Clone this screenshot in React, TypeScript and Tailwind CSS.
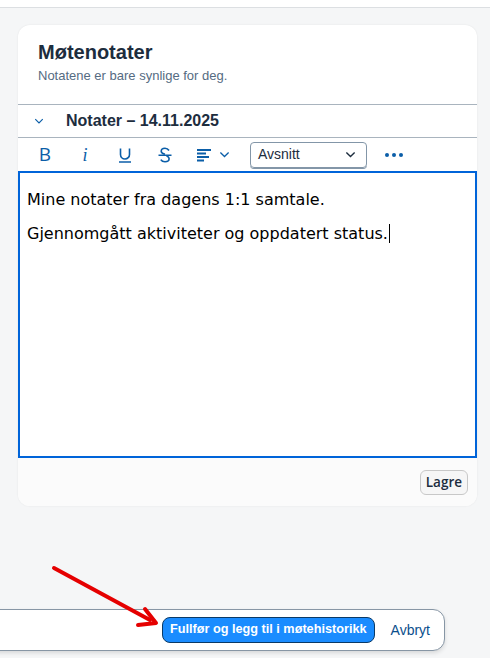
import React from "react";

const blue = "#0b5ea8";

function ToolbarButton({ children }: { children: React.ReactNode }) {
  return <button className="flex h-[28px] w-[40px] items-center justify-center">{children}</button>;
}

export default function App() {
  return (
    <div
      className="relative flex h-[658px] w-[490px] flex-col overflow-hidden bg-[#f5f6f7]"
      style={{ fontFamily: "'Liberation Sans', Arial, sans-serif" }}
    >
      <div className="h-[8px] shrink-0 border-b border-[#dcdfe2] bg-white" />

      <section className="ml-[18px] mr-[13px] mt-[17px] flex flex-col overflow-hidden rounded-xl bg-white shadow-[0_0_2px_rgba(0,0,0,0.08)]">
        <div className="px-5 pb-[20px] pt-[14px]">
          <h1 className="text-[20px] font-bold leading-[26px] text-[#1d2d3e]">Møtenotater</h1>
          <p className="mt-[3px] text-[13px] leading-[16px] text-[#556b82]">Notatene er bare synlige for deg.</p>
        </div>

        <div className="flex h-[34px] items-center border-y border-[#a9b4be] text-[#1d2d3e]">
          <svg viewBox="0 0 16 16" className="ml-[15px] h-[12px] w-[12px]" fill="none" stroke={blue} strokeWidth="1.6">
            <path d="M3 5.5 8 10.5 13 5.5" />
          </svg>
          <span className="ml-[21px] text-[16px] font-bold">Notater – 14.11.2025</span>
        </div>

        <div className="flex h-[33px] items-center pl-[7px]">
          <ToolbarButton>
            <span className="text-[19px] leading-none text-[#0b5ea8]" style={{ fontFamily: "'Open Sans', sans-serif" }}>B</span>
          </ToolbarButton>
          <ToolbarButton>
            <span className="text-[18px] italic leading-none text-[#0b5ea8]" style={{ fontFamily: "'Liberation Serif', serif" }}>i</span>
          </ToolbarButton>
          <ToolbarButton>
            <svg viewBox="0 0 16 16" className="h-[16px] w-[16px]" fill="none" stroke={blue} strokeWidth="1.6">
              <path d="M3.5 1.5v6a4.5 4.5 0 0 0 9 0v-6" />
              <path d="M2 15h12" />
            </svg>
          </ToolbarButton>
          <ToolbarButton>
            <svg viewBox="0 0 16 16" className="h-[16px] w-[16px]" fill="none" stroke={blue} strokeWidth="1.6">
              <path d="M12 3.5C11 1.8 9.5 1.2 8 1.2 5.8 1.2 4.2 2.5 4.2 4.2c0 1.4 1 2.3 3.8 3.1" />
              <path d="M9.5 9c1.8.6 2.6 1.5 2.6 2.8 0 1.8-1.7 3-4.1 3-1.8 0-3.4-.8-4.2-2.2" />
              <path d="M1.5 8.2h13" />
            </svg>
          </ToolbarButton>
          <div className="flex h-[28px] items-center gap-[7px] pl-[11px]">
            <svg viewBox="0 0 16 16" className="h-[16px] w-[16px]" fill="none" stroke={blue} strokeWidth="1.8">
              <path d="M1 3h14M1 6.5h9M1 10h12M1 13.5h7" />
            </svg>
            <svg viewBox="0 0 16 16" className="h-[11px] w-[11px]" fill="none" stroke={blue} strokeWidth="1.8">
              <path d="M2 5l6 6 6-6" />
            </svg>
          </div>
          <div className="ml-[20px] flex h-[26px] w-[117px] items-center justify-between rounded-[4px] border border-[#8396a8] pl-[7px] pr-[10px] text-[14px] text-[#1d2d3e] shadow-[0_1px_0_#8396a8]">
            <span>Avsnitt</span>
            <svg viewBox="0 0 16 16" className="h-[11px] w-[11px]" fill="none" stroke="#1d2d3e" strokeWidth="2">
              <path d="M2 5l6 6 6-6" />
            </svg>
          </div>
          <div className="ml-[18px] flex gap-[3px]">
            <span className="h-[4px] w-[4px] rounded-full bg-[#0b5ea8]" />
            <span className="h-[4px] w-[4px] rounded-full bg-[#0b5ea8]" />
            <span className="h-[4px] w-[4px] rounded-full bg-[#0b5ea8]" />
          </div>
        </div>

        <div
          className="h-[287px] border-2 border-[#0064d9] px-[7px] pt-[17px] text-[16px] leading-[20px] text-black"
          style={{ fontFamily: "'DejaVu Sans', Verdana, sans-serif" }}
        >
          <p>Mine notater fra dagens 1:1 samtale.</p>
          <p className="mt-[14px]">
            Gjennomgått aktiviteter og oppdatert status.
            <span className="ml-[1px] inline-block h-[19px] w-px bg-black align-[-4px]" />
          </p>
        </div>

        <div className="flex h-[48px] items-center justify-end bg-[#fbfbfb] pr-[9px]">
          <button
            className="h-[25px] rounded-[6px] border border-[#c8c8c8] bg-[#f6f6f6] px-[5px] text-[13.5px] font-semibold text-[#1d2d3e]"
            style={{ fontFamily: "'Open Sans', sans-serif" }}
          >
            Lagre
          </button>
        </div>
      </section>

      <div className="flex-1" />

      <div className="mb-[7px] -ml-3 flex h-[42px] w-[457px] items-center justify-end rounded-r-xl border border-[#8796a5] bg-white pr-[14px] shadow-[0_2px_4px_rgba(0,0,0,0.12)]">
        <button className="h-[26px] rounded-[8px] border border-[#0a3a66] bg-[#1a8cff] px-[7px] text-[12.7px] font-bold text-white">
          Fullfør og legg til i møtehistorikk
        </button>
        <button className="ml-[16px] text-[14px] text-[#0a4f8c]">Avbryt</button>
      </div>

      <svg className="pointer-events-none absolute left-0 top-0" width="490" height="658" viewBox="0 0 490 658">
        <path d="M54 568 L150 620" stroke="#e50000" strokeWidth="4" strokeLinecap="round" fill="none" />
        <path d="M145 609 L156 623 L138 625" stroke="#e50000" strokeWidth="4" strokeLinecap="round" strokeLinejoin="round" fill="none" />
      </svg>
    </div>
  );
}
